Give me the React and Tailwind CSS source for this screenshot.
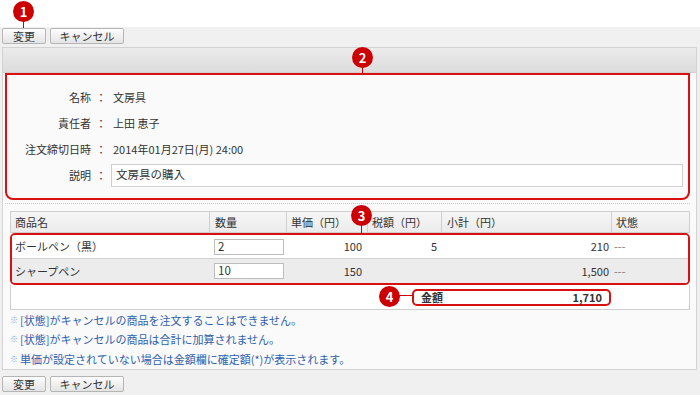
import React from "react";

const font = { fontFamily: '"Noto Sans CJK JP", "Liberation Sans", sans-serif' };

function Btn({ children, w }) {
  return (
    <button
      className={`h-[16px] ${w} border border-[#b5b5b5] rounded-[2px] bg-gradient-to-b from-[#fdfdfd] to-[#e4e4e4] text-[11px] leading-none text-[#333]`}
    >
      {children}
    </button>
  );
}

function Badge({ n, className }) {
  return (
    <div
      className={`absolute w-[21px] h-[21px] rounded-full bg-[#cc0000] text-white text-[13px] font-bold flex items-center justify-center leading-none ${className}`}
    >
      {n}
    </div>
  );
}

const rows = [
  { name: "ボールペン（黒）", qty: "2", price: "100", tax: "5", sub: "210", bg: "bg-white" },
  { name: "シャープペン", qty: "10", price: "150", tax: "", sub: "1,500", bg: "bg-[#ececec]" },
];

const notes = [
  "[状態]がキャンセルの商品を注文することはできません。",
  "[状態]がキャンセルの商品は合計に加算されません。",
  "単価が設定されていない場合は金額欄に確定額(*)が表示されます。",
];

export default function App() {
  return (
    <div className="relative w-[700px] h-[395px] bg-[#f0f0f0] overflow-hidden text-[#333]" style={font}>
      <div className="h-[27px] bg-white" />

      {/* top buttons */}
      <div className="flex gap-[4px] pl-[2px] pt-[1px]">
        <Btn w="w-[44px]">変更</Btn>
        <Btn w="w-[74px]">キャンセル</Btn>
      </div>

      {/* panel */}
      <div className="mt-[3px] ml-[2px] w-[695px] h-[323px] border border-[#d2d2d2] bg-[#fafafa]">
        <div className="h-[25px] bg-gradient-to-b from-[#ececec] to-[#dcdcdc] border-b border-[#d0d0d0]" />

        <div className="pl-[2px] pr-[6px]">
          {/* info block */}
          <div className="h-[127px] border-2 border-solid border-[#d81010] rounded-b-[8px] pt-[9px]">
            {[
              ["名称", "文房具"],
              ["責任者", "上田 恵子"],
              ["注文締切日時", "2014年01月27日(月) 24:00"],
            ].map(([l, v]) => (
              <div key={l} className="flex items-center h-[26px] text-[11px]">
                <span className="w-[84px] text-right">{l}</span>
                <span className="w-[20px] text-center">：</span>
                <span className="pl-[2px]">{v}</span>
              </div>
            ))}
            <div className="flex items-center h-[26px] text-[11px]">
              <span className="w-[84px] text-right">説明</span>
              <span className="w-[20px] text-center">：</span>
              <div className="w-[572px] h-[23px] border border-[#cfcfcf] bg-white flex items-center pl-[4px] text-[11.5px]">
                文房具の購入
              </div>
            </div>
          </div>
          <div className="mt-[3px] border-t border-dotted border-[#c8c8c8]" />
        </div>

        {/* table */}
        <div className="ml-[7px] mt-[7px] w-[680px] text-[11px]">
          <div className="flex h-[22px] bg-gradient-to-b from-[#f6f6f6] to-[#ebebeb] border border-[#cfcfcf] items-center">
            <div className="w-[199px] pl-[4px] border-r border-[#cfcfcf] h-full flex items-center">商品名</div>
            <div className="w-[77px] pl-[5px] border-r border-[#cfcfcf] h-full flex items-center">数量</div>
            <div className="w-[81px] pl-[4px] border-r border-[#cfcfcf] h-full flex items-center">単価（円）</div>
            <div className="w-[74px] pl-[4px] border-r border-[#cfcfcf] h-full flex items-center">税額（円）</div>
            <div className="w-[170px] pl-[5px] border-r border-[#cfcfcf] h-full flex items-center">小計（円）</div>
            <div className="flex-1 pl-[4px]">状態</div>
          </div>
          <div className="border-2 border-solid border-[#d81010] rounded-[5px] overflow-hidden">
            {rows.map((r, i) => (
              <div key={i} className={`flex h-[24px] items-center ${r.bg} ${i === 0 ? "border-b border-[#d0d0d0]" : ""}`}>
                <div className="w-[198px] pl-[3px]">{r.name}</div>
                <div className="w-[77px] pl-[4px]">
                  <div className="w-[70px] h-[16px] border border-[#bdbdbd] bg-white flex items-center pl-[3px] text-[11.5px]">{r.qty}</div>
                </div>
                <div className="w-[75px] text-right">{r.price}</div>
                <div className="w-[75px] text-right">{r.tax}</div>
                <div className="w-[172px] text-right">{r.sub}</div>
                <div className="flex-1 pl-[5px] text-[#777]">---</div>
              </div>
            ))}
          </div>
          <div className="h-[25px] bg-white border border-[#cfcfcf] border-t-0 flex items-center">
            <div className="ml-[401px] w-[199px] h-[17px] border-2 border-solid border-[#d81010] rounded-[5px] flex items-center justify-between px-[7px] font-bold">
              <span>金額</span>
              <span>1,710</span>
            </div>
          </div>
        </div>

        {/* notes */}
        <div className="ml-[7px] text-[11px] text-[#2f5fae]">
          {notes.map((t) => (
            <div key={t} className="h-[19.5px] flex items-center">
              <span className="text-[8px] text-[#8aa0c8] w-[10px]">※</span>
              <span>{t}</span>
            </div>
          ))}
        </div>
      </div>

      {/* bottom buttons */}
      <div className="flex gap-[4px] pl-[2px] pt-[6px]">
        <Btn w="w-[44px]">変更</Btn>
        <Btn w="w-[74px]">キャンセル</Btn>
      </div>

      {/* callouts */}
      <div className="absolute left-[23px] top-[18px] w-[1px] h-[10px] bg-[#cc0000]" />
      <Badge n="1" className="left-[13px] top-[1px]" />
      <div className="absolute left-[362px] top-[62px] w-[1px] h-[11px] bg-[#cc0000]" />
      <Badge n="2" className="left-[352px] top-[47px]" />
      <div className="absolute left-[361px] top-[220px] w-[1px] h-[14px] bg-[#cc0000]" />
      <Badge n="3" className="left-[351px] top-[205px]" />
      <div className="absolute left-[395px] top-[295px] w-[17px] h-[1px] bg-[#cc0000]" />
      <Badge n="4" className="left-[379px] top-[286px]" />
    </div>
  );
}
